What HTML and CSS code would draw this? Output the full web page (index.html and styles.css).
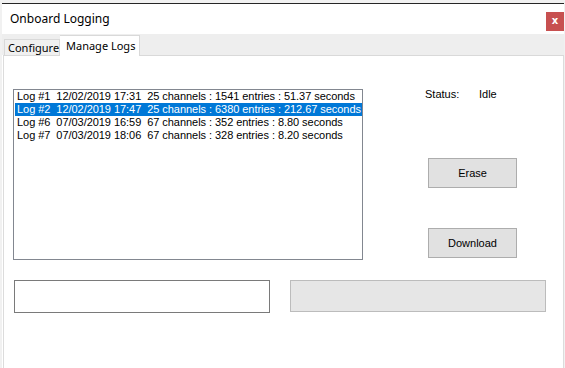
FILE: index.html
```html
<!DOCTYPE html>
<html>
<head>
<meta charset="utf-8">
<link rel="stylesheet" href="styles.css">
</head>
<body>
<div class="window">
  <div class="titlebar">
    <span class="title">Onboard Logging</span>
    <span class="close">x</span>
  </div>
  <div class="tabstrip">
    <div class="tab">Configure</div>
    <div class="tab active">Manage Logs</div>
  </div>
  <div class="panel">
    <div class="toprow">
      <div class="listbox">
        <div class="item">Log #1  12/02/2019 17:31  25 channels : 1541 entries : 51.37 seconds</div>
        <div class="item selected">Log #2  12/02/2019 17:47  25 channels : 6380 entries : 212.67 seconds</div>
        <div class="item">Log #6  07/03/2019 16:59  67 channels : 352 entries : 8.80 seconds</div>
        <div class="item">Log #7  07/03/2019 18:06  67 channels : 328 entries : 8.20 seconds</div>
      </div>
      <div class="side">
        <div class="status"><span class="label">Status:</span><span>Idle</span></div>
        <button class="btn erase">Erase</button>
        <button class="btn download">Download</button>
      </div>
    </div>
    <div class="bottomrow">
      <div class="textbox"></div>
      <div class="progress"></div>
    </div>
  </div>
</div>
</body>
</html>
```
FILE: styles.css
```css
html, body {
  margin: 0;
  padding: 0;
}
body {
  background: #f1f1f1;
  width: 565px;
  height: 368px;
  overflow: hidden;
  padding: 3px 0 0 2px;
  box-sizing: border-box;
  font-family: "Liberation Sans", Arial, sans-serif;
  font-size: 11px;
  color: #000;
}
.window {
  width: 562px;
  height: 365px;
  border-top: 1px solid #262626;
  background: #fff;
  display: flex;
  flex-direction: column;
}
.titlebar {
  height: 30px;
  background: #fff;
  display: flex;
  align-items: flex-start;
  justify-content: space-between;
}
.title {
  font-family: "Noto Sans", "Open Sans", sans-serif;
  font-size: 12px;
  margin: 6px 0 0 8px;
  color: #000;
}
.close {
  width: 18px;
  height: 19px;
  margin-top: 8px;
  background: #c75050;
  color: #fff;
  font-family: "DejaVu Sans", sans-serif;
  font-weight: bold;
  font-size: 10px;
  line-height: 17px;
  text-align: center;
}
.tabstrip {
  height: 21px;
  background: #eeeeee;
  display: flex;
  align-items: flex-end;
  padding-left: 2px;
}
.tab {
  font-family: "Noto Sans", "Open Sans", sans-serif;
  font-size: 11px;
  white-space: nowrap;
  height: 16px;
  line-height: 16px;
  border: 1px solid #d9d9d9;
  border-bottom: none;
  background: #f0f0f0;
  width: 56px;
  box-sizing: border-box;
  padding-left: 3px;
}
.tab.active {
  height: 21px;
  line-height: 20px;
  background: #fff;
  width: 80px;
  padding-left: 6px;
  border-left: none;
  margin-bottom: -1px;
  position: relative;
}
.panel {
  flex: 1;
  border-left: 1px solid #dcdcdc;
  border-right: 1px solid #dcdcdc;
  margin-left: 1px;
  background: #fff;
  display: flex;
  flex-direction: column;
  border-top: 1px solid #d9d9d9;
}
.toprow {
  display: flex;
  padding: 33px 0 0 9px;
}
.listbox {
  width: 347px;
  height: 169px;
  border: 1px solid #828790;
  padding-left: 1px;
  box-sizing: content-box;
  overflow: hidden;
}
.item {
  height: 13px;
  line-height: 13px;
  white-space: pre;
  padding-left: 2px;
  letter-spacing: -0.05px;
}
.item.selected {
  background: #0078d7;
  color: #fff;
}
.side {
  display: flex;
  flex-direction: column;
  padding-left: 62px;
}
.status {
  display: flex;
  margin-top: -1px;
  height: 13px;
}
.status .label {
  width: 54px;
}
.btn {
  font-family: "Liberation Sans", Arial, sans-serif;
  font-size: 11px;
  width: 89px;
  height: 30px;
  background: #e1e1e1;
  border: 1px solid #adadad;
  padding: 0;
  margin: 0;
  color: #000;
  margin-left: 3px;
}
.erase {
  margin-top: 57px;
}
.download {
  margin-top: 40px;
}
.bottomrow {
  display: flex;
  padding: 20px 0 0 10px;
  gap: 20px;
}
.textbox {
  width: 252px;
  height: 29px;
  border: 1px solid #7a7a7a;
  box-shadow: inset 0 0 0 1px #fff;
  padding: 1px;
}
.progress {
  width: 254px;
  height: 30px;
  background: #e6e6e6;
  border: 1px solid #bcbcbc;
}
```
